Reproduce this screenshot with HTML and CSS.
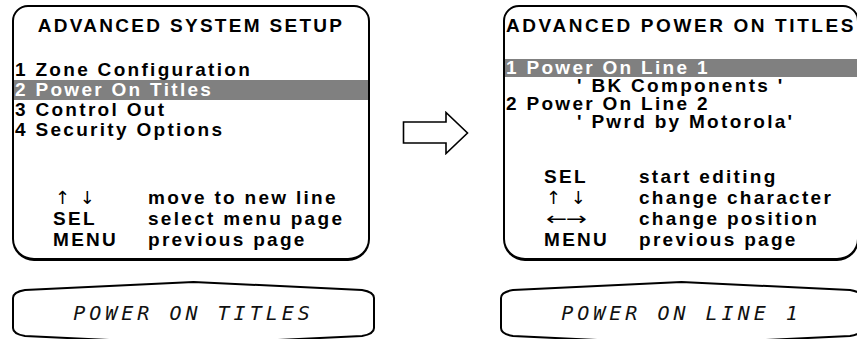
FILE: index.html
```html
<!DOCTYPE html>
<html lang="en">
<head>
    <meta charset="UTF-8">
    <title>Advanced Setup Screens</title>
    <link rel="stylesheet" href="styles.css">
</head>
<body>

    <div class="screens">
        <!-- System setup menu -->
        <div class="screen">
            <div class="title">ADVANCED SYSTEM SETUP</div>
            <div class="menu menu-wide">
                <div class="item">1 Zone Configuration</div>
                <div class="item selected">2 Power On Titles</div>
                <div class="item">3 Control Out</div>
                <div class="item">4 Security Options</div>
            </div>
            <div class="legend">
                <div class="key glyph">↑ ↓</div><div>move to new line</div>
                <div class="key">SEL</div><div>select menu page</div>
                <div class="key">MENU</div><div>previous page</div>
            </div>
        </div>

        <div class="arrow">
            <svg width="68" height="44" viewBox="0 0 68 44">
                <path d="M1.5,11 H44 V1.5 L65.5,22 L44,42.5 V32 H1.5 Z" fill="#fff" stroke="#000" stroke-width="1.6"/>
            </svg>
        </div>

        <!-- Power on titles menu -->
        <div class="screen screen-right">
            <div class="title">ADVANCED POWER ON TITLES</div>
            <div class="menu menu-tight">
                <div class="item selected">1 Power On Line 1</div>
                <div class="item indent">' BK Components '</div>
                <div class="item">2 Power On Line 2</div>
                <div class="item indent">' Pwrd by Motorola'</div>
            </div>
            <div class="legend">
                <div class="key">SEL</div><div>start editing</div>
                <div class="key glyph">↑ ↓</div><div>change character</div>
                <div class="key glyph"><span class="glyph-wide">←→</span></div><div>change position</div>
                <div class="key">MENU</div><div>previous page</div>
            </div>
        </div>
    </div>

    <div class="lcds">
        <div class="lcd">
            <svg class="lcd-frame" width="363" height="64" viewBox="0 0 363 64">
                <path d="M1,17 Q1,11 13,9 L181.5,1 L350,9 Q362,11 362,17 V47 Q362,53 350,55 L181.5,63 L13,55 Q1,53 1,47 Z" fill="none" stroke="#000" stroke-width="2"/>
            </svg>
            <span class="lcd-text">POWER ON TITLES</span>
        </div>
        <div class="lcd">
            <svg class="lcd-frame" width="363" height="64" viewBox="0 0 363 64">
                <path d="M1,17 Q1,11 13,9 L181.5,1 L350,9 Q362,11 362,17 V47 Q362,53 350,55 L181.5,63 L13,55 Q1,53 1,47 Z" fill="none" stroke="#000" stroke-width="2"/>
            </svg>
            <span class="lcd-text">POWER ON LINE 1</span>
        </div>
    </div>

</body>
</html>
```
FILE: styles.css
```css
html, body {
    margin: 0;
    padding: 0;
    background-color: #fff;
    overflow: hidden;
}
body {
    width: 857px;
    height: 339px;
    font-family: "Liberation Sans", Arial, sans-serif;
    font-weight: bold;
    font-size: 19px;
    letter-spacing: 2.3px;
    color: #000;
}
.screens {
    display: flex;
    padding: 5px 0 0 12px;
}
.screen {
    box-sizing: border-box;
    width: 358px;
    height: 256px;
    flex-shrink: 0;
    display: flex;
    flex-direction: column;
    padding: 9px 0 8px 0;
    border: 2px solid #000;
    border-bottom-width: 3px;
    border-radius: 16px 16px 22px 22px;
    white-space: nowrap;
}
.screen-right {
    width: 356px;
}
.title {
    line-height: 20px;
    text-align: center;
}
.screen-right .title {
    letter-spacing: 2.6px;
}
.menu-wide {
    margin-top: 24px;
    line-height: 20px;
}
.menu-tight {
    margin-top: 23px;
    line-height: 18px;
}
.item {
    padding-left: 1px;
}
.item.selected {
    background-color: #808080;
    color: #fff;
}
.item.indent {
    padding-left: 72px;
}
.legend {
    margin-top: auto;
    display: grid;
    grid-template-columns: 95px auto;
    padding-left: 39px;
    line-height: 21px;
}
.glyph {
    font-family: "DejaVu Sans", sans-serif;
    font-weight: normal;
    font-size: 18px;
    letter-spacing: 2px;
    padding-left: 2px;
}
.glyph-wide {
    display: inline-block;
    letter-spacing: -1px;
    transform: scaleX(1.4);
    transform-origin: left center;
    padding-left: 0;
}
.arrow {
    width: 132px;
    flex-shrink: 0;
    display: flex;
    align-items: center;
    justify-content: center;
    padding-right: 1px;
}
.lcds {
    display: flex;
    gap: 125px;
    margin-top: 20px;
    padding-left: 12px;
}
.lcd {
    position: relative;
    width: 363px;
    height: 64px;
    flex-shrink: 0;
    display: flex;
    align-items: center;
    justify-content: center;
}
.lcd-frame {
    position: absolute;
    top: 0;
    left: 0;
}
.lcd-text {
    position: relative;
    font-family: "DejaVu Sans Mono", monospace;
    font-weight: normal;
    font-style: italic;
    font-size: 20px;
    letter-spacing: 4px;
    color: #111;
}
```
